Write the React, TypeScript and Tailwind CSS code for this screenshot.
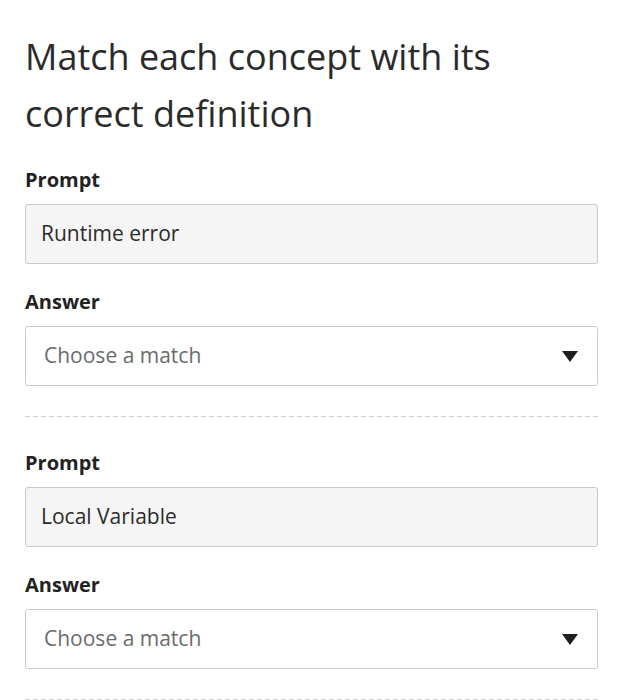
import React from 'react';

const pairs = [
  { prompt: 'Runtime error' },
  { prompt: 'Local Variable' },
];

const Caret = () => (
  <svg width="16" height="11" viewBox="0 0 16 11" className="shrink-0">
    <path d="M0 0 H16 L8 11 Z" fill="#1f1f1f" />
  </svg>
);

export default function App() {
  return (
    <div
      className="min-h-screen bg-white px-[25px] pt-[28px]"
      style={{ fontFamily: '"Open Sans", "Noto Sans", sans-serif' }}
    >
      <h1 className="text-[36px] leading-[57px] font-normal text-[#2b2b2b] mb-[24px]">
        Match each concept with its correct definition
      </h1>

      {pairs.map((p, i) => (
        <div key={i}>
          <div className="text-[20px] leading-[28px] font-bold text-[#222] mb-[10px]">Prompt</div>
          <div className="h-[60px] flex items-center pl-[15px] bg-[#f5f5f5] border border-[#c9c9c9] rounded-[3px] text-[21px] text-[#2b2b2b]">
            {p.prompt}
          </div>

          <div className="mt-[24px] text-[20px] leading-[28px] font-bold text-[#222] mb-[10px]">Answer</div>
          <div className="h-[60px] flex items-center justify-between pl-[18px] pr-[19px] bg-white border border-[#c9c9c9] rounded-[3px]">
            <span className="text-[21px] text-[#6b6b6b]">Choose a match</span>
            <Caret />
          </div>

          <div className="mt-[30px] mb-[32px] h-px bg-[repeating-linear-gradient(to_right,#cfcfcf_0_5px,transparent_5px_8px)]" />
        </div>
      ))}
    </div>
  );
}
